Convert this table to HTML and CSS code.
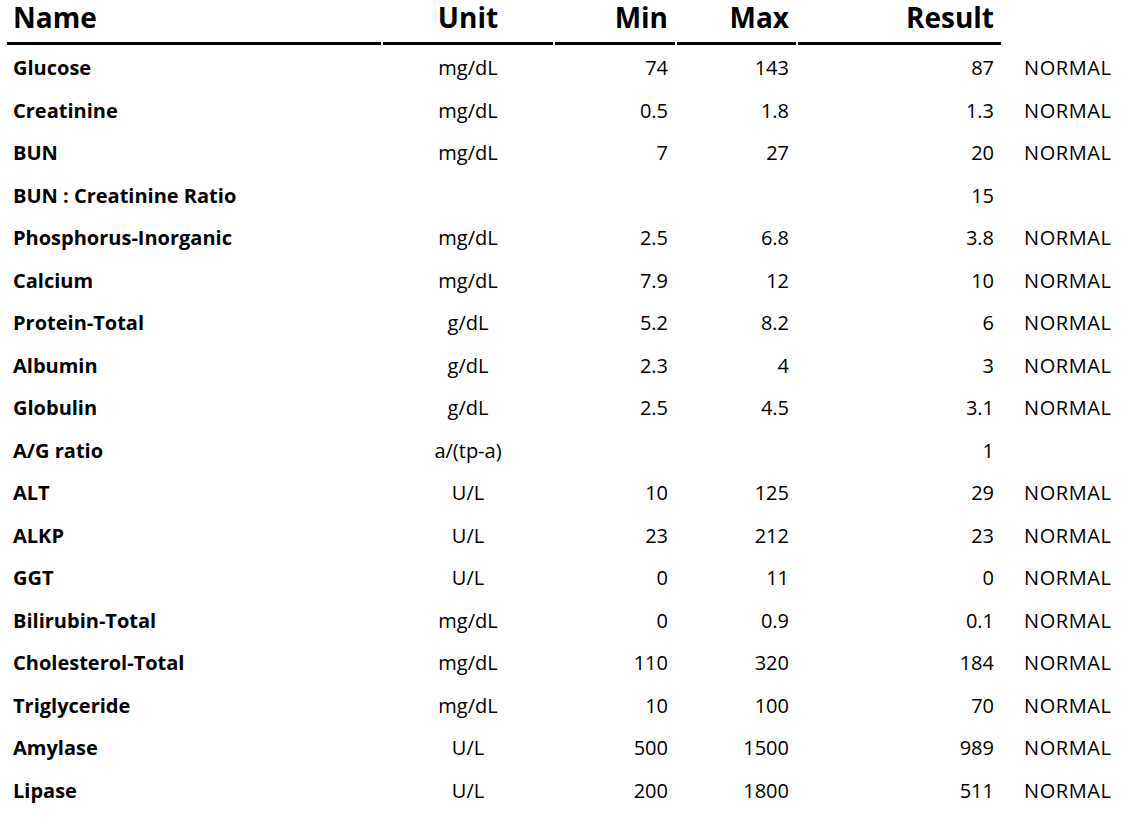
FILE: index.html
```html
<!DOCTYPE html>
<html lang="en">
<head>
<meta charset="utf-8">
<title>Lab Results</title>
<link rel="stylesheet" href="styles.css">
</head>
<body>
<table class="results">
  <colgroup>
    <col class="c-name">
    <col class="c-unit">
    <col class="c-min">
    <col class="c-max">
    <col class="c-result">
    <col class="c-status">
  </colgroup>
  <thead>
    <tr>
      <th class="name">Name</th>
      <th class="unit">Unit</th>
      <th class="num">Min</th>
      <th class="num">Max</th>
      <th class="num">Result</th>
      <th class="status-h"></th>
    </tr>
  </thead>
  <tbody>
    <tr><td class="name">Glucose</td><td class="unit">mg/dL</td><td class="num">74</td><td class="num">143</td><td class="num">87</td><td class="status">NORMAL</td></tr>
    <tr><td class="name">Creatinine</td><td class="unit">mg/dL</td><td class="num">0.5</td><td class="num">1.8</td><td class="num">1.3</td><td class="status">NORMAL</td></tr>
    <tr><td class="name">BUN</td><td class="unit">mg/dL</td><td class="num">7</td><td class="num">27</td><td class="num">20</td><td class="status">NORMAL</td></tr>
    <tr><td class="name">BUN : Creatinine Ratio</td><td class="unit"></td><td class="num"></td><td class="num"></td><td class="num">15</td><td class="status"></td></tr>
    <tr><td class="name">Phosphorus-Inorganic</td><td class="unit">mg/dL</td><td class="num">2.5</td><td class="num">6.8</td><td class="num">3.8</td><td class="status">NORMAL</td></tr>
    <tr><td class="name">Calcium</td><td class="unit">mg/dL</td><td class="num">7.9</td><td class="num">12</td><td class="num">10</td><td class="status">NORMAL</td></tr>
    <tr><td class="name">Protein-Total</td><td class="unit">g/dL</td><td class="num">5.2</td><td class="num">8.2</td><td class="num">6</td><td class="status">NORMAL</td></tr>
    <tr><td class="name">Albumin</td><td class="unit">g/dL</td><td class="num">2.3</td><td class="num">4</td><td class="num">3</td><td class="status">NORMAL</td></tr>
    <tr><td class="name">Globulin</td><td class="unit">g/dL</td><td class="num">2.5</td><td class="num">4.5</td><td class="num">3.1</td><td class="status">NORMAL</td></tr>
    <tr><td class="name">A/G ratio</td><td class="unit">a/(tp-a)</td><td class="num"></td><td class="num"></td><td class="num">1</td><td class="status"></td></tr>
    <tr><td class="name">ALT</td><td class="unit">U/L</td><td class="num">10</td><td class="num">125</td><td class="num">29</td><td class="status">NORMAL</td></tr>
    <tr><td class="name">ALKP</td><td class="unit">U/L</td><td class="num">23</td><td class="num">212</td><td class="num">23</td><td class="status">NORMAL</td></tr>
    <tr><td class="name">GGT</td><td class="unit">U/L</td><td class="num">0</td><td class="num">11</td><td class="num">0</td><td class="status">NORMAL</td></tr>
    <tr><td class="name">Bilirubin-Total</td><td class="unit">mg/dL</td><td class="num">0</td><td class="num">0.9</td><td class="num">0.1</td><td class="status">NORMAL</td></tr>
    <tr><td class="name">Cholesterol-Total</td><td class="unit">mg/dL</td><td class="num">110</td><td class="num">320</td><td class="num">184</td><td class="status">NORMAL</td></tr>
    <tr><td class="name">Triglyceride</td><td class="unit">mg/dL</td><td class="num">10</td><td class="num">100</td><td class="num">70</td><td class="status">NORMAL</td></tr>
    <tr><td class="name">Amylase</td><td class="unit">U/L</td><td class="num">500</td><td class="num">1500</td><td class="num">989</td><td class="status">NORMAL</td></tr>
    <tr><td class="name">Lipase</td><td class="unit">U/L</td><td class="num">200</td><td class="num">1800</td><td class="num">511</td><td class="status">NORMAL</td></tr>
  </tbody>
</table>
</body>
</html>
```

FILE: styles.css
```css
html, body {
  background: #ffffff;
}
body {
  margin: 0 5px;
  font-family: "Open Sans", "Noto Sans CJK KR", sans-serif;
  color: #000;
}
.results {
  table-layout: fixed;
  width: 1125px;
  border-collapse: separate;
  border-spacing: 2px;
}
.c-name { width: 374px; }
.c-unit { width: 170px; }
.c-min { width: 120px; }
.c-max { width: 119px; }
.c-result { width: 203px; }
.c-status { width: 125px; }

.results th {
  font-size: 28px;
  font-weight: 700;
  line-height: 28px;
  padding: 1px 7px 11px;
  border-bottom: 3px solid #000;
  vertical-align: top;
}
.results th.status-h {
  border-bottom: none;
}
.results td {
  font-size: 20px;
  line-height: 24.5px;
  padding: 9px 7px 7px;
  white-space: nowrap;
}
.name {
  text-align: left;
}
.results .name {
  padding-left: 6px;
}
td.name {
  font-weight: 700;
}
.unit {
  text-align: center;
}
.num {
  text-align: right;
}
td.status {
  text-align: left;
  padding-left: 21px;
  letter-spacing: 0.6px;
}
```
